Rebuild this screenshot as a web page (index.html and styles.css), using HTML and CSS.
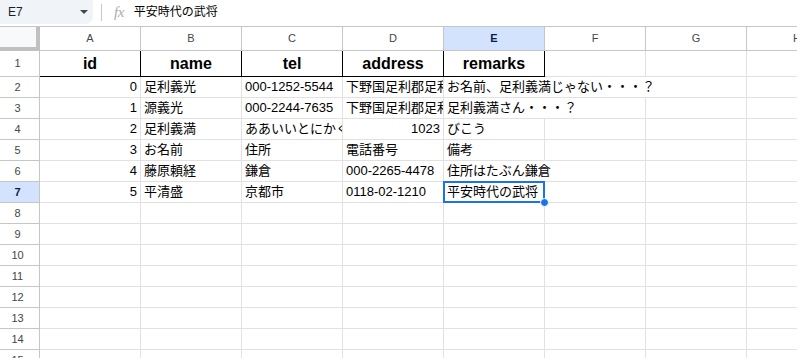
FILE: index.html
```html
<!DOCTYPE html>
<html lang="ja">
<head>
<meta charset="utf-8">
<link rel="stylesheet" href="styles.css">
</head>
<body>
<div class="topbar">
  <div class="namebox"><span class="ref">E7</span><span class="caret"></span></div>
  <div class="sep"></div>
  <div class="fx">fx</div>
  <div class="formula">平安時代の武将</div>
</div>
<div class="sheet">
  <div class="row hdr">
    <div class="corner"></div>
    <div class="ch">A</div><div class="ch">B</div><div class="ch">C</div><div class="ch">D</div><div class="ch sel">E</div><div class="ch">F</div><div class="ch">G</div><div class="ch">H</div>
  </div>
  <div class="row r1">
    <div class="rh">1</div>
    <div class="c head">id</div><div class="c head">name</div><div class="c head">tel</div><div class="c head">address</div><div class="c head">remarks</div><div class="c"></div><div class="c"></div><div class="c"></div>
  </div>
  <div class="row">
    <div class="rh">2</div>
    <div class="c num">0</div><div class="c">足利義光</div><div class="c">000-1252-5544</div><div class="c clip">下野国足利郡足利荘</div><div class="c span3">お名前、足利義満じゃない・・・？</div><div class="c"></div>
  </div>
  <div class="row">
    <div class="rh">3</div>
    <div class="c num">1</div><div class="c">源義光</div><div class="c">000-2244-7635</div><div class="c clip">下野国足利郡足利荘</div><div class="c span2">足利義満さん・・・？</div><div class="c"></div><div class="c"></div>
  </div>
  <div class="row">
    <div class="rh">4</div>
    <div class="c num">2</div><div class="c">足利義満</div><div class="c clip">ああいいとにかくながい</div><div class="c num">1023</div><div class="c">びこう</div><div class="c"></div><div class="c"></div><div class="c"></div>
  </div>
  <div class="row">
    <div class="rh">5</div>
    <div class="c num">3</div><div class="c">お名前</div><div class="c">住所</div><div class="c">電話番号</div><div class="c">備考</div><div class="c"></div><div class="c"></div><div class="c"></div>
  </div>
  <div class="row">
    <div class="rh">6</div>
    <div class="c num">4</div><div class="c">藤原頼経</div><div class="c">鎌倉</div><div class="c">000-2265-4478</div><div class="c span2">住所はたぶん鎌倉</div><div class="c"></div><div class="c"></div>
  </div>
  <div class="row">
    <div class="rh sel">7</div>
    <div class="c num">5</div><div class="c">平清盛</div><div class="c">京都市</div><div class="c">0118-02-1210</div><div class="c">平安時代の武将</div><div class="c"></div><div class="c"></div><div class="c"></div>
  </div>
  <div class="row"><div class="rh">8</div><div class="c"></div><div class="c"></div><div class="c"></div><div class="c"></div><div class="c"></div><div class="c"></div><div class="c"></div><div class="c"></div></div>
  <div class="row"><div class="rh">9</div><div class="c"></div><div class="c"></div><div class="c"></div><div class="c"></div><div class="c"></div><div class="c"></div><div class="c"></div><div class="c"></div></div>
  <div class="row"><div class="rh">10</div><div class="c"></div><div class="c"></div><div class="c"></div><div class="c"></div><div class="c"></div><div class="c"></div><div class="c"></div><div class="c"></div></div>
  <div class="row"><div class="rh">11</div><div class="c"></div><div class="c"></div><div class="c"></div><div class="c"></div><div class="c"></div><div class="c"></div><div class="c"></div><div class="c"></div></div>
  <div class="row"><div class="rh">12</div><div class="c"></div><div class="c"></div><div class="c"></div><div class="c"></div><div class="c"></div><div class="c"></div><div class="c"></div><div class="c"></div></div>
  <div class="row"><div class="rh">13</div><div class="c"></div><div class="c"></div><div class="c"></div><div class="c"></div><div class="c"></div><div class="c"></div><div class="c"></div><div class="c"></div></div>
  <div class="row"><div class="rh">14</div><div class="c"></div><div class="c"></div><div class="c"></div><div class="c"></div><div class="c"></div><div class="c"></div><div class="c"></div><div class="c"></div></div>
  <div class="row"><div class="rh">15</div><div class="c"></div><div class="c"></div><div class="c"></div><div class="c"></div><div class="c"></div><div class="c"></div><div class="c"></div><div class="c"></div></div>
  <div class="selection"></div>
  <div class="handle"></div>
</div>
</body>
</html>
```

FILE: styles.css
```css
html, body {
  margin: 0;
  padding: 0;
  background: #fff;
}
body {
  width: 797px;
  height: 358px;
  overflow: hidden;
  font-family: "Liberation Sans", "Noto Sans CJK JP", sans-serif;
  color: #000;
}
.topbar {
  height: 27px;
  box-sizing: border-box;
  border-bottom: 1px solid #c4c7c5;
  display: flex;
  align-items: flex-start;
}
.namebox {
  width: 93px;
  height: 24px;
  box-sizing: border-box;
  background: #f0f4f9;
  border-radius: 0 0 8px 0;
  display: flex;
  align-items: center;
  padding-left: 8px;
  padding-right: 5px;
}
.ref {
  font-size: 12px;
  color: #1f1f1f;
  flex: 1;
}
.caret {
  width: 0;
  height: 0;
  border-left: 4px solid transparent;
  border-right: 4px solid transparent;
  border-top: 4px solid #444746;
}
.sep {
  width: 1px;
  height: 17px;
  background: #c4c7c5;
  margin: 4px 0 0 8px;
}
.fx {
  font-family: "Liberation Serif", serif;
  font-style: italic;
  font-size: 15px;
  color: #a8abaf;
  margin: 2px 0 0 12px;
  letter-spacing: -0.5px;
  line-height: 20px;
}
.formula {
  font-size: 12px;
  line-height: 20px;
  margin: 2px 0 0 10px;
  color: #000;
}
.sheet {
  position: relative;
}
.row {
  display: flex;
  height: 21px;
}
.row.hdr {
  height: 24px;
}
.row.r1 {
  height: 26px;
}
.corner {
  flex: none;
  width: 40px;
  box-sizing: border-box;
  background: #f8f9fa;
  border-right: 4px solid #c0c0c0;
  border-bottom: 4px solid #c0c0c0;
}
.ch {
  flex: none;
  width: 101px;
  box-sizing: border-box;
  border-right: 1px solid #c4c7c5;
  border-bottom: 1px solid #c4c7c5;
  font-size: 11px;
  color: #444746;
  text-align: center;
  line-height: 23px;
}
.ch.sel {
  background: #d3e3fd;
  color: #041e49;
  font-weight: bold;
}
.rh {
  flex: none;
  width: 40px;
  box-sizing: border-box;
  border-right: 1px solid #c4c7c5;
  border-bottom: 1px solid #c4c7c5;
  font-size: 11px;
  color: #444746;
  text-align: center;
  padding-right: 4px;
  line-height: 20px;
}
.r1 .rh {
  line-height: 25px;
}
.rh.sel {
  background: #d3e3fd;
  color: #041e49;
  font-weight: bold;
}
.c {
  flex: none;
  width: 101px;
  box-sizing: border-box;
  border-right: 1px solid #e1e1e1;
  border-bottom: 1px solid #e1e1e1;
  padding: 0 3px;
  font-size: 13px;
  line-height: 20px;
  white-space: nowrap;
  overflow: visible;
}
.c.clip {
  overflow: hidden;
}
.c.num {
  text-align: right;
}
.c.span2 {
  width: 202px;
}
.c.span3 {
  width: 303px;
}
.c.head {
  font-size: 16px;
  font-weight: bold;
  text-align: center;
  line-height: 25px;
  border-right-color: #000;
  border-bottom-color: #000;
}
.selection {
  position: absolute;
  left: 443px;
  top: 154px;
  width: 102px;
  height: 22px;
  box-sizing: border-box;
  border: 2px solid #1a73e8;
}
.handle {
  position: absolute;
  left: 540px;
  top: 171px;
  width: 9px;
  height: 9px;
  box-sizing: border-box;
  border-radius: 50%;
  background: #1a73e8;
  border: 1px solid #fff;
}
```
